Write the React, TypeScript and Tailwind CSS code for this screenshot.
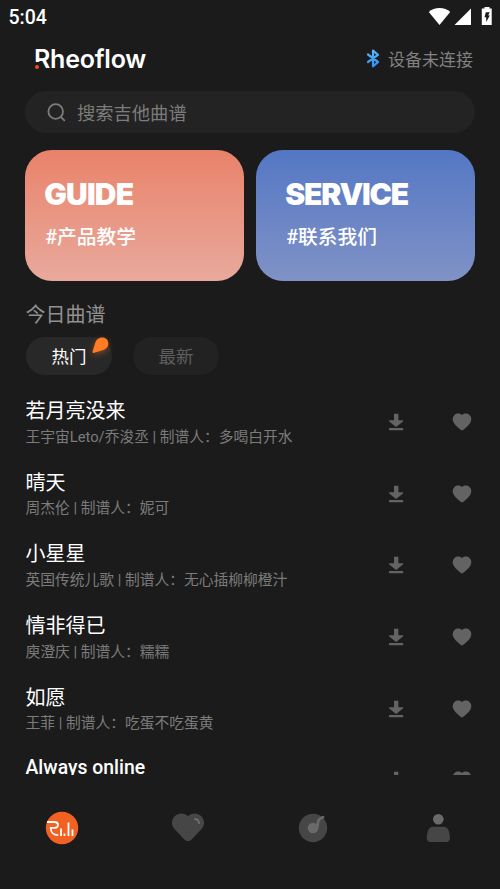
import type { ReactNode } from "react";

type Song = {
  title: string;
  credit?: string;
};

const SONGS: Song[] = [
  { title: "若月亮没来", credit: "王宇宙Leto/乔浚丞 | 制谱人：多喝白开水" },
  { title: "晴天", credit: "周杰伦 | 制谱人：妮可" },
  { title: "小星星", credit: "英国传统儿歌 | 制谱人：无心插柳柳橙汁" },
  { title: "情非得已", credit: "庾澄庆 | 制谱人：糯糯" },
  { title: "如愿", credit: "王菲 | 制谱人：吃蛋不吃蛋黄" },
  { title: "Always online" },
];

function StatusBar() {
  return (
    <div className="flex h-[34px] items-center justify-between pl-[8.500px] pr-[7px] text-white">
      <span className="pt-[2px] text-[19.5px] font-medium leading-none">5:04</span>
      <div className="flex h-full items-start pt-[7px]">
        <svg className="mr-[3px]" width="23" height="18" viewBox="0 0 23 18" fill="currentColor">
          <path d="M.8 5C3.400 2.400 7.300 1 11.500 1s8.100 1.400 10.700 4L11.500 18z" />
        </svg>
        <svg className="mr-[9px]" width="18" height="18" viewBox="0 0 18 18" fill="currentColor">
          <path d="M17 1.500V18H.5z" />
        </svg>
        <svg width="12" height="18" viewBox="0 0 12 18">
          <path d="M3.500 0h5v1.500h2.200v16.500H.8V1.500h2.700z" fill="#fff" />
          <path d="M4.800 5.200h3.900L7.200 8.600h1.600L5.200 15v-4.700H3.500z" fill="#1b1b1b" />
        </svg>
      </div>
    </div>
  );
}

function Header() {
  return (
    <header className="flex h-[50px] items-center justify-between pl-[34px] pr-[27px]">
      <div className="relative">
        <span className="block font-['Inter','Liberation_Sans',sans-serif] text-[25px] font-semibold leading-[50px] tracking-[-0.200px] text-white">
          Rheoflow
        </span>
        {/* dot replaces the foot of the R */}
        <span className="absolute left-0 top-[28px] flex h-[7px] w-[5.500px] items-end bg-[#1b1b1b] pl-[1px]">
          <i className="size-1 shrink-0 rounded-full bg-[#ff4a0c]" />
        </span>
      </div>
      <div className="flex items-center gap-[8px] text-[17px] leading-none text-[#828282]">
        <svg className="mb-px" width="14" height="19" viewBox="0 0 14 19" fill="none" stroke="url(#bt)" strokeWidth="2.200" strokeLinejoin="round" strokeLinecap="round">
          <defs>
            <linearGradient id="bt" x1="0" y1="0" x2="0" y2="1">
              <stop stopColor="#59b7f5" />
              <stop offset="1" stopColor="#2d92f8" />
            </linearGradient>
          </defs>
          <path d="m2 5.500 10 7.500-5 4.300V1.700l5 4.100L2 13" />
        </svg>
        <span className="pt-[2px]">设备未连接</span>
      </div>
    </header>
  );
}

function SearchBar() {
  return (
    <div className="mx-[25px] mt-[7px] flex h-[42px] items-center rounded-full bg-[#232323] pl-[22px] text-[18.300px] text-[#7c7c7c]">
      <svg className="mr-[11px]" width="19" height="19" viewBox="0 0 19 19" fill="none" stroke="currentColor" strokeWidth="1.800" strokeLinecap="round">
        <circle cx="8.700" cy="8.500" r="7.300" />
        <path d="m14.300 14.300 3 3" />
      </svg>
      <span className="pt-[5px] leading-none">搜索吉他曲谱</span>
    </div>
  );
}

function Banner({ heading, caption, className }: { heading: string; caption: string; className: string }) {
  return (
    <div className={`h-[131px] w-[218.500px] rounded-[27px] bg-linear-to-b pt-[28px] text-white ${className}`}>
      <div className="font-['Inter',sans-serif] text-[30px] font-black leading-[33px]">{heading}</div>
      <div className="mt-[12px] pl-[1px] text-[19.700px] font-medium leading-[29px] tracking-normal">{caption}</div>
    </div>
  );
}

function Tabs() {
  return (
    <div className="mt-[7px] flex gap-[21px] px-[26px] text-[17.500px] leading-none">
      <div className="relative flex h-[38px] w-[86px] items-center justify-center rounded-full bg-[#282828] pt-[3px] text-white">
        热门
        <svg className="absolute right-[2px] top-0 overflow-visible drop-shadow-[0_2px_3px_#ff7b2466]" width="18" height="18" viewBox="0 0 18 18" fill="#ff7b24">
          <path d="M.6 14.500 3 6.500C4 2.600 6.800.4 10 .4c4 0 6.300 2.600 6.300 6 0 3.200-2 5.500-5 6.500l-9 2.900c-1.200.4-2-.2-1.700-1.300z" />
        </svg>
      </div>
      <div className="flex h-[38px] w-[86px] items-center justify-center rounded-full bg-[#222222] pt-[3px] text-[#5e5e5e]">最新</div>
    </div>
  );
}

function SongRow({ song }: { song: Song }) {
  return (
    <li className="flex h-[71.700px] items-center pl-[25.500px] pr-[28px]">
      {song.credit ? (
        <div className="flex-1 pt-px">
          <div className="text-[20px] leading-[27.500px] text-white">{song.title}</div>
          <div className="text-[14.750px] leading-[23px] text-[#7b7b7b]">{song.credit}</div>
        </div>
      ) : (
        <div className="flex-1 pb-[26px] text-[19.400px] font-medium leading-[22px] text-white">{song.title}</div>
      )}
      <svg className="mb-[2px] mr-[48.500px] text-[#636363]" width="16" height="18" viewBox="0 0 16 18" fill="currentColor">
        <path d="M6 .8h4.400v6.500h4c.8 0 1 .6.500 1.100L8.900 13.500a1.100 1.100 0 0 1-1.500 0L1.300 8.400c-.6-.5-.3-1.100.5-1.100H6z" />
        <rect x=".8" y="15" width="14.500" height="2.200" rx="1" />
      </svg>
      <svg className="mb-[2px] text-[#636363]" width="20" height="18" viewBox="0 0 20 18" fill="currentColor">
        <path d="M10 2C7.800.1 4.500 0 2.500 2 .2 4.200.1 7.500 2 10.200c1.600 2.300 4.400 5 7 6.900.7.500 1.300.5 2 0 2.600-1.900 5.400-4.600 7-6.900 1.900-2.700 1.800-6-.5-8.200-2-2-5.300-1.900-7.500 0z" />
      </svg>
    </li>
  );
}

function NavItem({ children }: { children: ReactNode }) {
  return <div className="flex flex-1 justify-center">{children}</div>;
}

function BottomNav() {
  return (
    <nav className="flex h-[105px] items-center">
      <NavItem>
        <svg className="mr-px" width="34" height="34" viewBox="0 0 34 34" fill="none" stroke="#fff" strokeWidth="1.800">
          <circle cx="17" cy="17" r="16.200" fill="#f26024" stroke="none" />
          <path d="M2 11h7.500c2.400 0 3.500 1.200 3.500 3s-1.200 2.800-3.200 2.800H5.700c0 4.200 2.800 7.400 7.500 7.400" />
          <path d="M16 17.500V25M19.500 22.500V25M23.500 11.500V25M27.500 18.500V25" />
        </svg>
      </NavItem>
      <NavItem>
        <svg width="34" height="32" viewBox="0 0 34 32">
          <path d="M17 4.300C13.500.7 8 .8 4.300 3.700.1 7.200-.1 13 3.500 17.100L13.300 27.500c2.300 2.300 5.100 2.300 7.400 0l9.800-10.400c3.600-4.100 3.400-9.900-.8-13.400C26 .8 20.500.7 17 4.300z" fill="#464646" />
          <path d="M24 7c2.300.2 3.800 1.700 4 4.200" fill="none" stroke="#707070" strokeWidth="1.800" strokeLinecap="round" />
        </svg>
      </NavItem>
      <NavItem>
        <svg width="30" height="30" viewBox="0 0 30 30">
          <circle cx="15" cy="15" r="14.200" fill="#464646" />
          <circle cx="15" cy="15" r="5.300" fill="#6a6a6a" />
          <path d="M18.800 16c1.200-3 .5-6.500 1.800-8.800.9-1.700 2.700-2.400 4.400-3" fill="none" stroke="#6a6a6a" strokeWidth="2.800" strokeLinecap="round" />
        </svg>
      </NavItem>
      <NavItem>
        <svg width="26" height="30" viewBox="0 0 26 30">
          <circle cx="13.300" cy="6.200" r="5.300" fill="#6a6a6a" />
          <path d="M8.500 13.700h9.700c3.400 0 5.200 2.200 5.900 5.300l.8 4.500c.6 3.500-1.100 5.500-4.200 5.500H6c-3.100 0-4.800-2-4.200-5.500l.8-4.500c.7-3.100 2.500-5.300 5.900-5.300z" fill="#464646" />
        </svg>
      </NavItem>
    </nav>
  );
}

export default function App() {
  return (
    <div className="flex h-[889px] w-[500px] flex-col overflow-hidden bg-[#1b1b1b] font-['Roboto','Noto_Sans_CJK_SC',sans-serif]">
      <StatusBar />
      <Header />
      <SearchBar />
      <div className="mt-[17px] flex justify-between px-[25.250px]">
        <Banner heading="GUIDE" caption="#产品教学" className="from-[#e9826a] to-[#e8a99c] pl-[19px] tracking-[-0.800px]" />
        <Banner heading="SERVICE" caption="#联系我们" className="from-[#5477c4] to-[#8092c6] pl-[29px] tracking-[-1.200px]" />
      </div>
      <h2 className="mt-[20px] px-[25.500px] text-[20px] leading-[29px] text-[#919191]">今日曲谱</h2>
      <Tabs />
      <ul className="mt-[12px] h-[388px] shrink-0 overflow-hidden">
        {SONGS.map((song) => (
          <SongRow key={song.title} song={song} />
        ))}
      </ul>
      <BottomNav />
    </div>
  );
}
